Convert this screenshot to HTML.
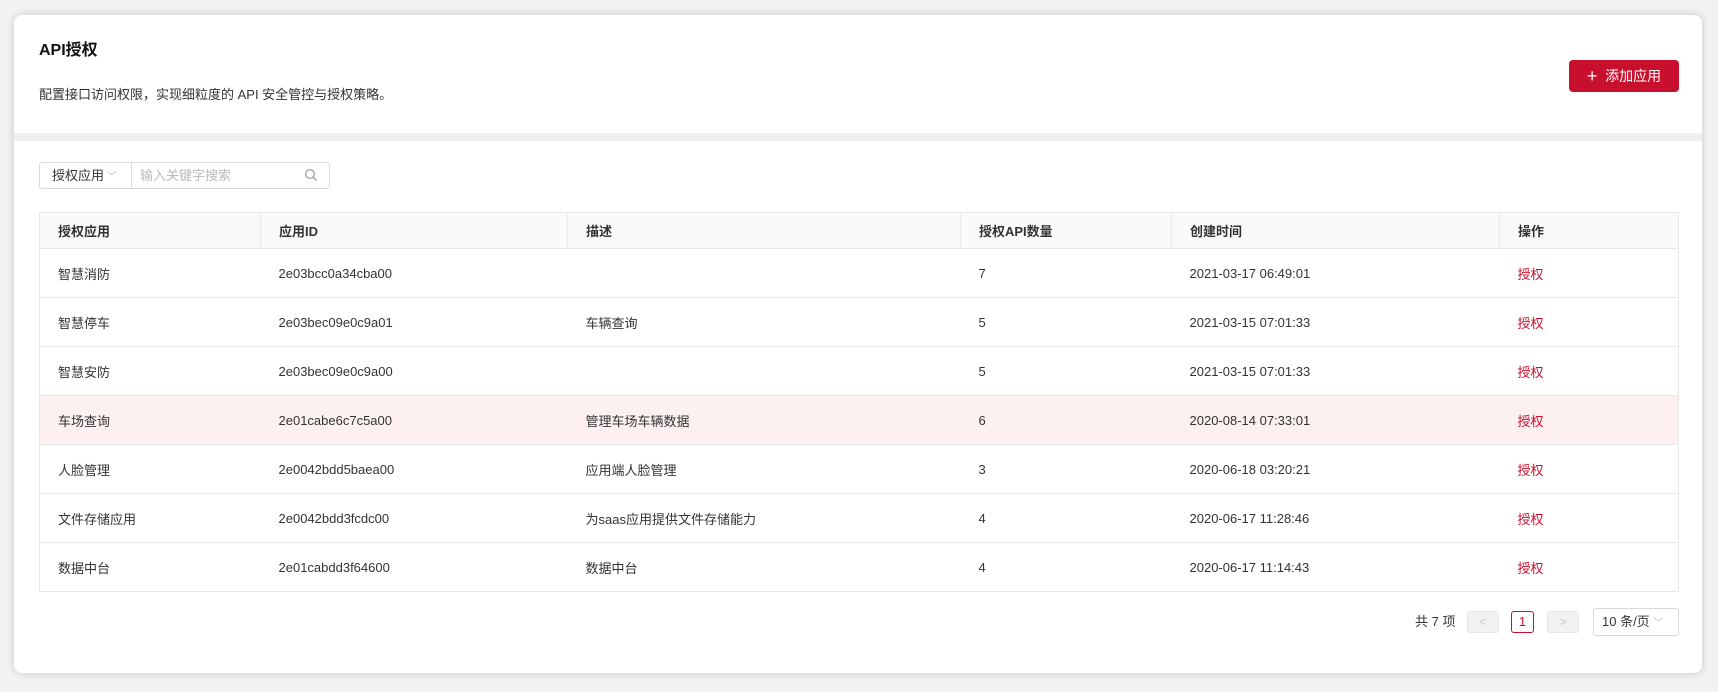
<!DOCTYPE html>
<html><head><meta charset="utf-8"><style>
*{box-sizing:border-box;margin:0;padding:0}
body{width:1718px;height:692px;background:#f2f2f2;font-family:"Liberation Sans","Noto Sans CJK SC",sans-serif;color:#333;position:relative;overflow:hidden}
.card{position:absolute;left:14px;top:15px;width:1688px;height:658px;background:#f0f0f0;border-radius:8px;box-shadow:0 0 8px rgba(0,0,0,.18);overflow:hidden}
.head{position:absolute;left:0;top:0;width:100%;height:118px;background:#fff}
.body{position:absolute;left:0;top:126px;width:100%;height:532px;background:#fff}
.abs{position:absolute}
h1{position:absolute;left:25px;top:21px;font-size:16px;font-weight:bold;color:#111}
.desc{left:25px;top:69px;font-size:13px;color:#333}
.btn{left:1555px;top:45px;width:110px;height:32px;background:#c8102e;border-radius:4px;color:#fff;font-size:14px;line-height:32px;text-align:center}
.sel{left:25px;top:21px;width:93px;height:27px;border:1px solid #d9d9d9;border-radius:3px 0 0 3px;font-size:13px;line-height:25px;padding-left:12px}
.inp{left:117px;top:21px;width:199px;height:27px;border:1px solid #d9d9d9;border-radius:0 3px 3px 0;font-size:13px;line-height:25px;padding-left:8px;color:#bbb}
table{position:absolute;left:25px;top:71px;width:1640px;border-collapse:collapse;font-size:13px;border:1px solid #e8e8e8}
th{height:36px;background:#fafafa;text-align:left;font-weight:bold;padding-left:18px;border-bottom:1px solid #e8e8e8;border-right:1px solid #ececec;color:#333}
th:last-child{border-right:none}
td{height:49px;padding-left:18px;border-bottom:1px solid #e8e8e8;color:#333}
tr.hl td{background:#fdf0f1}
td.op{color:#c8102e}
.pg{font-size:13px;line-height:22px}
.box{position:absolute;height:22px;border-radius:3px;text-align:center;font-size:13px;line-height:20px}
</style></head><body>
<div class="card">
 <div class="head">
  <h1>API授权</h1>
  <div class="abs desc">配置接口访问权限，实现细粒度的 API 安全管控与授权策略。</div>
  <div class="abs btn"><span style="font-size:18px;font-weight:300;vertical-align:-1px">+</span>&nbsp; 添加应用</div>
 </div>
 <div class="body">
  <div class="abs sel">授权应用<span style="color:#bbb;font-size:10px"> ﹀</span></div>
  <div class="abs inp">输入关键字搜索
   <svg class="abs" style="left:172px;top:5px" width="14" height="14" viewBox="0 0 14 14"><circle cx="6" cy="6" r="4.3" fill="none" stroke="#999" stroke-width="1.2"/><path d="M9.2 9.2L12.5 12.5" stroke="#999" stroke-width="1.3"/></svg>
  </div>
  <table>
   <colgroup><col style="width:221px"><col style="width:307px"><col style="width:393px"><col style="width:211px"><col style="width:328px"><col></colgroup>
   <tr><th>授权应用</th><th>应用ID</th><th>描述</th><th>授权API数量</th><th>创建时间</th><th>操作</th></tr>
   <tr><td>智慧消防</td><td>2e03bcc0a34cba00</td><td></td><td>7</td><td>2021-03-17 06:49:01</td><td class="op">授权</td></tr>
   <tr><td>智慧停车</td><td>2e03bec09e0c9a01</td><td>车辆查询</td><td>5</td><td>2021-03-15 07:01:33</td><td class="op">授权</td></tr>
   <tr><td>智慧安防</td><td>2e03bec09e0c9a00</td><td></td><td>5</td><td>2021-03-15 07:01:33</td><td class="op">授权</td></tr>
   <tr class="hl"><td>车场查询</td><td>2e01cabe6c7c5a00</td><td>管理车场车辆数据</td><td>6</td><td>2020-08-14 07:33:01</td><td class="op">授权</td></tr>
   <tr><td>人脸管理</td><td>2e0042bdd5baea00</td><td>应用端人脸管理</td><td>3</td><td>2020-06-18 03:20:21</td><td class="op">授权</td></tr>
   <tr><td>文件存储应用</td><td>2e0042bdd3fcdc00</td><td>为saas应用提供文件存储能力</td><td>4</td><td>2020-06-17 11:28:46</td><td class="op">授权</td></tr>
   <tr><td>数据中台</td><td>2e01cabdd3f64600</td><td>数据中台</td><td>4</td><td>2020-06-17 11:14:43</td><td class="op">授权</td></tr>
  </table>
  <div class="abs pg" style="left:1401px;top:470px">共 7 项</div>
  <div class="box" style="left:1453px;top:470px;width:32px;background:#f2f2f2;border:1px solid #e6e6e6;color:#ccc">&lt;</div>
  <div class="box" style="left:1497px;top:470px;width:23px;border:1px solid #c8102e;color:#c8102e">1</div>
  <div class="box" style="left:1533px;top:470px;width:32px;background:#f2f2f2;border:1px solid #e6e6e6;color:#ccc">&gt;</div>
  <div class="box" style="left:1579px;top:467px;width:86px;height:28px;line-height:26px;border:1px solid #d9d9d9;text-align:left;padding-left:8px">10 条/页 <span style="color:#bbb;font-size:10px">﹀</span></div>
 </div>
</div>
</body></html>
